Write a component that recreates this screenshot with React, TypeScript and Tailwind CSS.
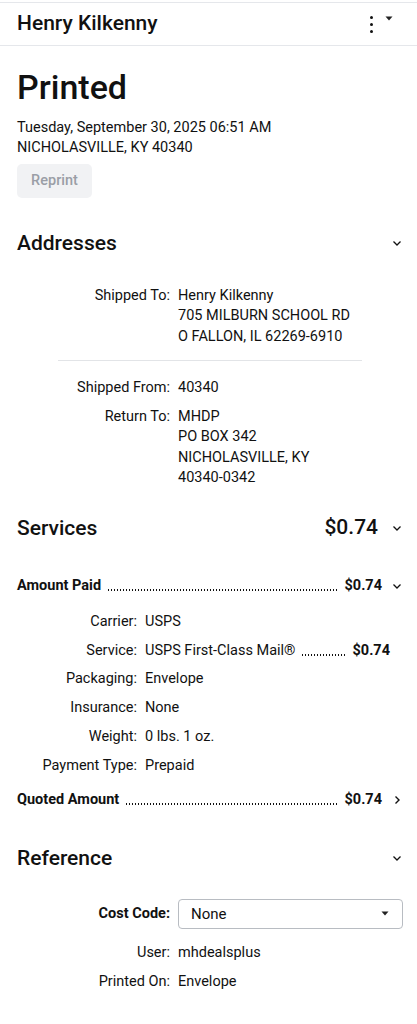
import React from "react";

const font = { fontFamily: "Roboto, 'Noto Sans', sans-serif" };

const ChevronDown = () => (
  <span className="-mr-[3px] flex">
    <svg width="12" height="12" viewBox="0 0 12 12" fill="none" stroke="#111" strokeWidth="1.3">
      <path d="M2.5 4.5 L6 8 L9.5 4.5" />
    </svg>
  </span>
);

const ChevronRight = () => (
  <span className="-mr-[3px] flex">
    <svg width="12" height="12" viewBox="0 0 12 12" fill="none" stroke="#111" strokeWidth="1.4">
      <path d="M4.5 2.5 L8 6 L4.5 9.5" />
    </svg>
  </span>
);

const Caret = () => (
  <svg width="8" height="5" viewBox="0 0 8 5" fill="#222">
    <path d="M0.5 0.5 L7.5 0.5 L4 4.5 Z" />
  </svg>
);

// dotted leader between a label and its amount
const Dots = () => (
  <span className="flex-1 min-w-0 mx-[6px] self-end mb-[5px] h-[2px] bg-[radial-gradient(circle,#111_0.9px,transparent_1.1px)] bg-[length:3px_2px] bg-repeat-x" />
);

const Row = ({
  label,
  children,
  labelW,
  bold,
}: {
  label: string;
  children: React.ReactNode;
  labelW: string;
  bold?: boolean;
}) => (
  <div className="flex">
    <div className={`${labelW} shrink-0 text-right pr-2 ${bold ? "font-semibold" : ""}`}>{label}</div>
    <div className="flex-1 min-w-0">{children}</div>
  </div>
);

export default function App() {
  return (
    <div className="min-h-screen bg-white text-[#111] pt-[2px]" style={font}>
      {/* header */}
      <div className="flex items-center justify-between h-[44px] border-y border-[#e5e7eb] pl-[17px] pr-[24px]">
        <h2 className="text-[21px] font-medium">Henry Kilkenny</h2>
        <div className="flex items-start gap-[12px]">
          <div className="flex flex-col gap-[4px] pt-[1px]">
            <span className="w-[3px] h-[3px] rounded-full bg-[#111]" />
            <span className="w-[3px] h-[3px] rounded-full bg-[#111]" />
            <span className="w-[3px] h-[3px] rounded-full bg-[#111]" />
          </div>
          <div className="pt-[1px]">
            <Caret />
          </div>
        </div>
      </div>

      <div className="px-[17px]">
        {/* status */}
        <h1 className="text-[34px] font-medium mt-[21px] leading-[40px]">Printed</h1>
        <div className="mt-[11px] text-[14.5px] leading-[20px]">
          <div>Tuesday, September 30, 2025 06:51 AM</div>
          <div>NICHOLASVILLE, KY 40340</div>
        </div>
        <button className="mt-[6px] h-[34px] w-[75px] rounded-[5px] bg-[#f1f2f4] text-[14.5px] font-medium text-[#9a9ea6]">
          Reprint
        </button>

        {/* addresses */}
        <div className="flex items-center justify-between mt-[31px]">
          <h3 className="text-[21px] font-medium leading-[28px]">Addresses</h3>
          <ChevronDown />
        </div>
        <div className="mt-[29px] text-[14.5px] leading-[20.3px]">
          <Row label="Shipped To:" labelW="w-[161px]">
            <div>Henry Kilkenny</div>
            <div>705 MILBURN SCHOOL RD</div>
            <div>O FALLON, IL 62269-6910</div>
          </Row>
          <div className="ml-[41px] w-[304px] border-t border-[#e2e4e7] mt-[13px] mb-[17px]" />
          <Row label="Shipped From:" labelW="w-[161px]">
            40340
          </Row>
          <div className="mt-[9px]">
            <Row label="Return To:" labelW="w-[161px]">
              <div>MHDP</div>
              <div>PO BOX 342</div>
              <div>NICHOLASVILLE, KY</div>
              <div>40340-0342</div>
            </Row>
          </div>
        </div>

        {/* services */}
        <div className="flex items-center justify-between mt-[24px]">
          <h3 className="text-[21px] font-medium leading-[28px]">Services</h3>
          <div className="flex items-center gap-[13px]">
            <span className="text-[21px] font-medium">$0.74</span>
            <ChevronDown />
          </div>
        </div>
        <div className="flex items-center mt-[32px] text-[14.5px] leading-[20px]">
          <span className="font-bold">Amount Paid</span>
          <Dots />
          <span className="font-bold">$0.74</span>
          <span className="ml-[9px]">
            <ChevronDown />
          </span>
        </div>
        <div className="mt-[16px] text-[14.5px] leading-[20px] flex flex-col gap-[8.8px]">
          <Row label="Carrier:" labelW="w-[128px]">
            USPS
          </Row>
          <Row label="Service:" labelW="w-[128px]">
            <div className="flex items-center pr-[10px]">
              <span>USPS First-Class Mail®</span>
              <Dots />
              <span className="font-bold">$0.74</span>
            </div>
          </Row>
          <Row label="Packaging:" labelW="w-[128px]">
            Envelope
          </Row>
          <Row label="Insurance:" labelW="w-[128px]">
            None
          </Row>
          <Row label="Weight:" labelW="w-[128px]">
            0 lbs. 1 oz.
          </Row>
          <Row label="Payment Type:" labelW="w-[128px]">
            Prepaid
          </Row>
        </div>
        <div className="flex items-center mt-[14px] text-[14.5px] leading-[20px]">
          <span className="font-bold">Quoted Amount</span>
          <Dots />
          <span className="font-bold">$0.74</span>
          <span className="ml-[9px]">
            <ChevronRight />
          </span>
        </div>

        {/* reference */}
        <div className="flex items-center justify-between mt-[34px]">
          <h3 className="text-[21px] font-medium leading-[28px]">Reference</h3>
          <ChevronDown />
        </div>
        <div className="mt-[27px] text-[14.5px] leading-[20px]">
          <div className="flex items-center">
            <div className="w-[161px] shrink-0 text-right pr-2 font-bold">Cost Code:</div>
            <div className="flex-1 h-[30px] -mr-[3px] border border-[#b8bcc2] rounded-[4px] flex items-center justify-between pl-[12px] pr-[13px]">
              <span className="text-[15px]">None</span>
              <Caret />
            </div>
          </div>
          <div className="mt-[14px] flex flex-col gap-[8.8px]">
            <Row label="User:" labelW="w-[161px]">
              mhdealsplus
            </Row>
            <Row label="Printed On:" labelW="w-[161px]">
              Envelope
            </Row>
          </div>
        </div>
      </div>
    </div>
  );
}
